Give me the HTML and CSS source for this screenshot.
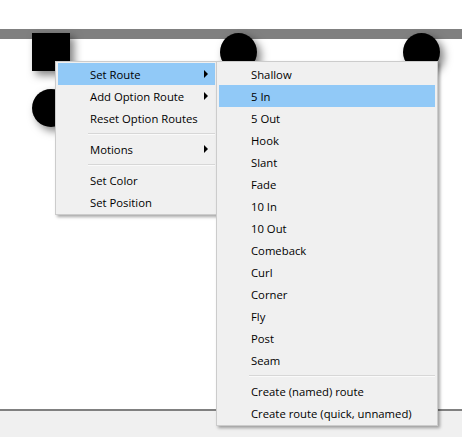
FILE: index.html
```html
<!DOCTYPE html>
<html>
<head>
<meta charset="utf-8">
<link rel="stylesheet" href="styles.css">
</head>
<body>
<div class="app">
  <div class="canvas">
    <div class="bar"></div>
    <div class="shape square s1"></div>
    <div class="shape circle s2"></div>
    <div class="shape circle s3"></div>
    <div class="shape circle s4"></div>

    <div class="menu main">
      <div class="item hl"><span>Set Route</span><i class="arrow"></i></div>
      <div class="item"><span>Add Option Route</span><i class="arrow"></i></div>
      <div class="item"><span>Reset Option Routes</span></div>
      <div class="sep"></div>
      <div class="item"><span>Motions</span><i class="arrow"></i></div>
      <div class="sep"></div>
      <div class="item"><span>Set Color</span></div>
      <div class="item"><span>Set Position</span></div>
    </div>

    <div class="menu sub">
      <div class="item"><span>Shallow</span></div>
      <div class="item hl"><span>5 In</span></div>
      <div class="item"><span>5 Out</span></div>
      <div class="item"><span>Hook</span></div>
      <div class="item"><span>Slant</span></div>
      <div class="item"><span>Fade</span></div>
      <div class="item"><span>10 In</span></div>
      <div class="item"><span>10 Out</span></div>
      <div class="item"><span>Comeback</span></div>
      <div class="item"><span>Curl</span></div>
      <div class="item"><span>Corner</span></div>
      <div class="item"><span>Fly</span></div>
      <div class="item"><span>Post</span></div>
      <div class="item"><span>Seam</span></div>
      <div class="sep"></div>
      <div class="item"><span>Create (named) route</span></div>
      <div class="item"><span>Create route (quick, unnamed)</span></div>
    </div>
  </div>
  <div class="status"></div>
</div>
</body>
</html>
```

FILE: styles.css
```css
html, body {
  margin: 0;
  padding: 0;
  background: #ffffff;
}

.app {
  width: 462px;
  height: 437px;
  display: flex;
  flex-direction: column;
  overflow: hidden;
  font-family: "Open Sans", "Noto Sans", "Liberation Sans", sans-serif;
  font-size: 11.3px;
  color: #000;
}

.canvas {
  position: relative;
  height: 409px;
  background: #ffffff;
}

.bar {
  margin-top: 29px;
  height: 10px;
  background: #808080;
}

.shape {
  position: absolute;
  width: 38px;
  height: 38px;
  background: #000;
  filter: drop-shadow(4px 4px 4px rgba(0, 0, 0, 0.5));
}

.circle { border-radius: 50%; }

.s1 { left: 32px; top: 33px; }
.s2 { left: 32px; top: 89px; }
.s3 { left: 220px; top: 33px; width: 37px; height: 38px; }
.s4 { left: 403px; top: 33px; width: 37px; height: 38px; }

.menu {
  position: absolute;
  top: 61px;
  box-sizing: border-box;
  display: flex;
  flex-direction: column;
  background: #f0f0f0;
  border: 1px solid #cccccc;
  padding: 1px 2px;
  box-shadow: 2px 2px 3px rgba(0, 0, 0, 0.35);
}

.main {
  left: 55px;
  width: 163px;
}

.sub {
  left: 216px;
  width: 222px;
}

.item {
  height: 22px;
  display: flex;
  align-items: center;
  padding-left: 32px;
  white-space: nowrap;
}

.item.hl {
  background: #91c9f7;
}

.arrow {
  margin-left: auto;
  margin-right: 7px;
  width: 0;
  height: 0;
  border-left: 4px solid #000;
  border-top: 4px solid transparent;
  border-bottom: 4px solid transparent;
}

.sep {
  margin: 4px 0 3px 30px;
  height: 0;
  border-top: 1px solid #d7d7d7;
  border-bottom: 1px solid #fafafa;
}

.status {
  flex: 1;
  border-top: 2px solid #808080;
  background: #f0f0f0;
}
```
